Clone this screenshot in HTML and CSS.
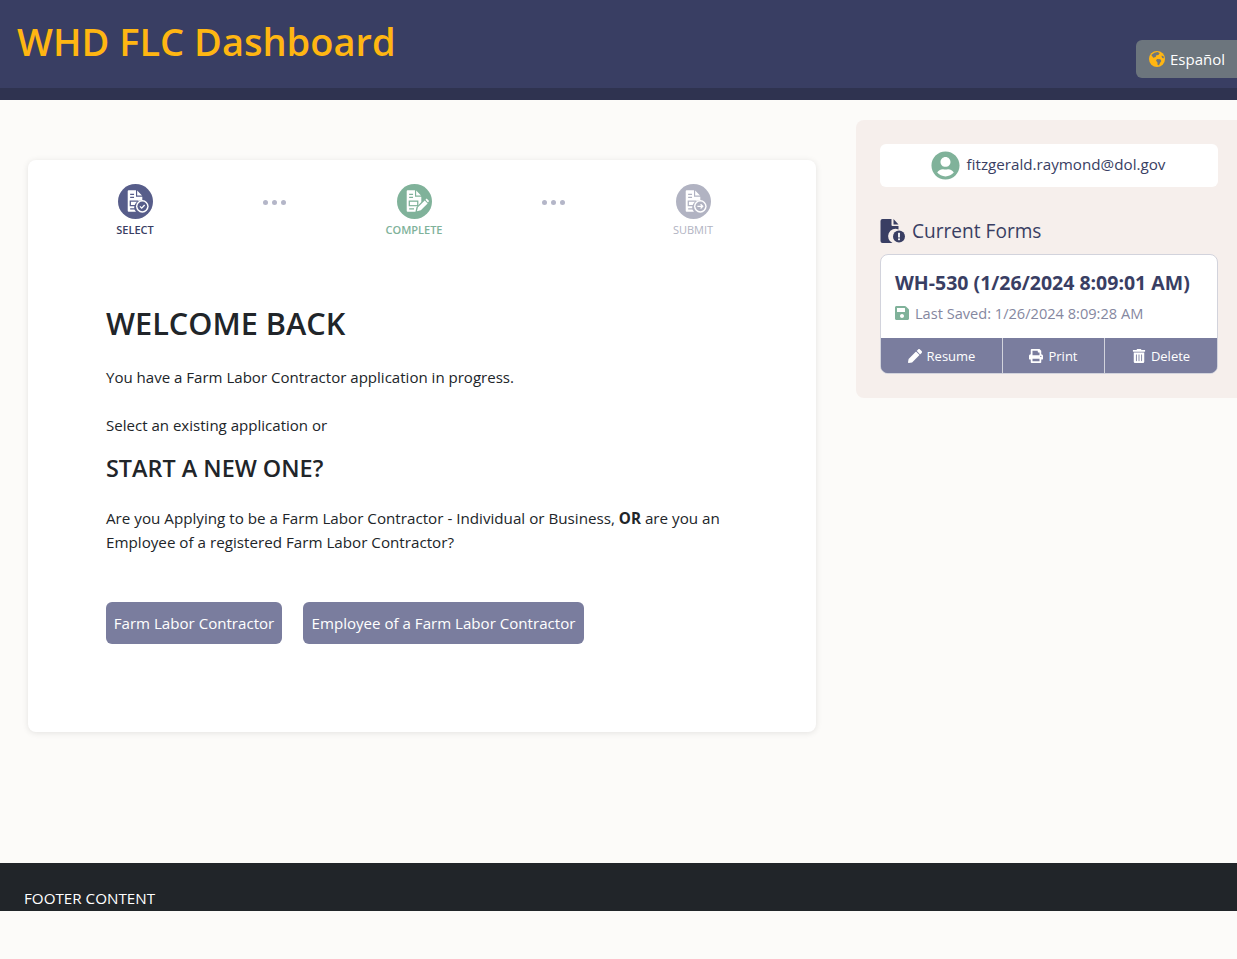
FILE: index.html
```html
<!DOCTYPE html>
<html lang="en">
<head>
<meta charset="utf-8">
<title>WHD FLC Dashboard</title>
<link rel="stylesheet" href="styles.css">
</head>
<body>
<header class="site-header">
  <div class="header-main">
    <h1 class="site-title">WHD FLC Dashboard</h1>
    <button class="lang-btn">
      <svg class="lang-icon" viewBox="0 0 24 24"><circle cx="12" cy="12" r="12" fill="#ffb612"/><path fill="#6c757d" d="M8 2.500l5-1 3 2-2 2.500-3 .5-1 2.500-3.500 1-2-2.500L3.500 6zM12 12l5 .5 1.500 2.500-2 3-1.500 3.500-2-.5-.5-4-2-2.500zM18.500 7l3 .5 1 3.500-2.500-.5z"/></svg>
      <span>Español</span>
    </button>
  </div>
  <div class="header-band"></div>
</header>

<main class="page">
  <section class="card">
    <ol class="steps">
      <li class="step step-select">
        <svg class="step-icon" viewBox="0 0 36 36"><circle cx="18" cy="18" r="18" fill="#575d8a"/><path fill="#fff" d="M11 6.500h7.500v6.500H25v4a7 7 0 0 0-6.500 11.500H11a1 1 0 0 1-1-1v-20a1 1 0 0 1 1-1zM19.700 6.800l5 5h-5z"/><path fill="#575d8a" d="M12.500 10h4v1.300h-4zM12.500 13h4v1.300h-4zM12 17h9v1.300h-7.700v3.400h5v1.300H12zM12.500 25h5v1.300h-5z"/><circle cx="25" cy="23" r="6.500" fill="#fff"/><circle cx="25" cy="23" r="5" fill="#575d8a"/><path fill="none" stroke="#fff" stroke-width="1.400" d="M22.600 23l1.800 1.800 3-3.200"/></svg>
        <span class="step-label">SELECT</span>
      </li>
      <li class="dots"><i></i><i></i><i></i></li>
      <li class="step step-complete">
        <svg class="step-icon" viewBox="0 0 36 36"><circle cx="18" cy="18" r="18" fill="#80b29a"/><path fill="#fff" d="M11 6.500h7.500v6.500H25v5.500l-5 5.500-1 4.500h-8a1 1 0 0 1-1-1v-20a1 1 0 0 1 1-1zM19.700 6.800l5 5h-5z"/><path fill="#80b29a" d="M12.500 10h4v1.300h-4zM12.500 13h4v1.300h-4zM12 17h10v6H12zM12.500 25h5v1.300h-5z"/><path fill="#fff" d="M13.300 18.300h7.400v3.400h-7.400z"/><path fill="#fff" d="M20.500 28l1-4 7-7 3 3-7 7zM29.300 16.200l1.200-1.200 2.500 2.500-1.200 1.500z"/></svg>
        <span class="step-label">COMPLETE</span>
      </li>
      <li class="dots"><i></i><i></i><i></i></li>
      <li class="step step-submit">
        <svg class="step-icon" viewBox="0 0 36 36"><circle cx="18" cy="18" r="18" fill="#b1b3c2"/><path fill="#fff" d="M11 6.500h7.500v6.500H25v4a7 7 0 0 0-6.500 11.500H11a1 1 0 0 1-1-1v-20a1 1 0 0 1 1-1zM19.700 6.800l5 5h-5z"/><path fill="#b1b3c2" d="M12.500 10h4v1.300h-4zM12.500 13h4v1.300h-4zM12 17h9v1.300h-7.700v3.400h5v1.300H12zM12.500 25h5v1.300h-5z"/><circle cx="25" cy="23" r="6.500" fill="#fff"/><circle cx="25" cy="23" r="5" fill="#b1b3c2"/><path fill="none" stroke="#fff" stroke-width="1.300" d="M22 23h5.500M25.300 20.800l2.200 2.200-2.200 2.200"/></svg>
        <span class="step-label">SUBMIT</span>
      </li>
    </ol>
    <div class="card-body">
      <h2 class="welcome">WELCOME BACK</h2>
      <p class="intro">You have a Farm Labor Contractor application in progress.</p>
      <p class="select-line">Select an existing application or</p>
      <h3 class="start">START A NEW ONE?</h3>
      <p class="question">Are you Applying to be a Farm Labor Contractor - Individual or Business, <strong>OR</strong> are you an Employee of a registered Farm Labor Contractor?</p>
      <div class="actions">
        <button class="primary-btn">Farm Labor Contractor</button>
        <button class="primary-btn">Employee of a Farm Labor Contractor</button>
      </div>
    </div>
  </section>

  <aside class="sidebar">
    <div class="user-box">
      <svg class="user-icon" viewBox="0 0 496 512"><path fill="#80b29a" d="M248 8C111 8 0 119 0 256s111 248 248 248 248-111 248-248S385 8 248 8zm0 96c48.600 0 88 39.400 88 88s-39.400 88-88 88-88-39.400-88-88 39.400-88 88-88zm0 344c-58.700 0-111.300-26.600-146.500-68.200 18.800-35.400 55.600-59.800 98.500-59.800 2.400 0 4.800.4 7.100 1.100 13 4.200 26.600 6.900 40.900 6.900 14.300 0 28-2.700 40.900-6.900 2.300-.7 4.700-1.100 7.100-1.100 42.900 0 79.700 24.400 98.500 59.800C359.300 421.400 306.700 448 248 448z"/></svg>
      <span class="user-email">fitzgerald.raymond@dol.gov</span>
    </div>
    <h2 class="forms-title">
      <svg class="forms-icon" viewBox="0 0 25 24"><path fill="#393e63" d="M2 0h9v6a1 1 0 0 0 1 1h6v3.500a7 7 0 0 0-6 13.500H2a2 2 0 0 1-2-2V2a2 2 0 0 1 2-2zM13 0l5 5.500h-5z"/><circle cx="18.500" cy="17.500" r="6" fill="#393e63"/><rect x="17.600" y="13.800" width="1.800" height="4.700" fill="#fff"/><rect x="17.600" y="19.400" width="1.800" height="1.800" fill="#fff"/></svg>
      <span>Current Forms</span>
    </h2>
    <article class="form-card">
      <div class="form-info">
        <h3 class="form-name">WH-530 (1/26/2024 8:09:01 AM)</h3>
        <p class="form-saved">
          <svg class="save-icon" viewBox="0 0 448 512"><path fill="#80b29a" d="M433.941 129.941l-83.882-83.882A48 48 0 0 0 316.118 32H48C21.490 32 0 53.490 0 80v352c0 26.510 21.490 48 48 48h352c26.510 0 48-21.490 48-48V163.882a48 48 0 0 0-14.059-33.941zM224 416c-35.346 0-64-28.654-64-64 0-35.346 28.654-64 64-64s64 28.654 64 64c0 35.346-28.654 64-64 64zm96-304.520V212c0 6.627-5.373 12-12 12H76c-6.627 0-12-5.373-12-12V108c0-6.627 5.373-12 12-12h228.520c3.183 0 6.235 1.264 8.485 3.515l3.480 3.480A11.996 11.996 0 0 1 320 111.480z"/></svg>
          <span>Last Saved: 1/26/2024 8:09:28 AM</span>
        </p>
      </div>
      <div class="form-actions">
        <button class="form-btn btn-resume"><svg class="btn-icon" viewBox="0 0 512 512"><path fill="#fff" d="M497.900 142.100l-46.100 46.100c-4.700 4.700-12.300 4.700-17 0l-111-111c-4.700-4.700-4.700-12.300 0-17l46.100-46.100c18.700-18.700 49.100-18.700 67.900 0l60.100 60.100c18.800 18.700 18.800 49.100 0 67.900zM284.200 99.800L21.600 362.400.4 483.900c-2.900 16.400 11.400 30.600 27.800 27.800l121.500-21.300 262.600-262.600c4.700-4.700 4.700-12.300 0-17l-111-111c-4.800-4.700-12.400-4.700-17.100 0z"/></svg>Resume</button>
        <button class="form-btn btn-print"><svg class="btn-icon" viewBox="0 0 512 512"><path fill="#fff" d="M448 192V77.250c0-8.490-3.370-16.620-9.370-22.630L393.370 9.370c-6-6-14.140-9.370-22.630-9.370H96C78.330 0 64 14.330 64 32v160c-35.350 0-64 28.650-64 64v112c0 8.840 7.160 16 16 16h48v96c0 17.670 14.330 32 32 32h320c17.670 0 32-14.330 32-32v-96h48c8.840 0 16-7.160 16-16V256c0-35.350-28.650-64-64-64zm-64 256H128v-96h256v96zm0-224H128V64h192v48c0 8.840 7.160 16 16 16h48v96zm48 72c-13.250 0-24-10.750-24-24 0-13.260 10.750-24 24-24s24 10.740 24 24c0 13.250-10.750 24-24 24z"/></svg>Print</button>
        <button class="form-btn btn-delete"><svg class="btn-icon" viewBox="0 0 448 512"><path fill="#fff" d="M32 464a48 48 0 0 0 48 48h288a48 48 0 0 0 48-48V128H32zm272-256a16 16 0 0 1 32 0v224a16 16 0 0 1-32 0zm-96 0a16 16 0 0 1 32 0v224a16 16 0 0 1-32 0zm-96 0a16 16 0 0 1 32 0v224a16 16 0 0 1-32 0zM432 32H312l-9.400-18.700A24 24 0 0 0 281.100 0H166.800a23.720 23.720 0 0 0-21.400 13.300L136 32H16A16 16 0 0 0 0 48v32a16 16 0 0 0 16 16h416a16 16 0 0 0 16-16V48a16 16 0 0 0-16-16z"/></svg>Delete</button>
      </div>
    </article>
  </aside>
</main>

<footer class="site-footer"><span>FOOTER CONTENT</span></footer>
</body>
</html>
```

FILE: styles.css
```css
* { box-sizing: border-box; }
html, body { margin: 0; padding: 0; }
body {
  background: #fcfbf9;
  color: #212529;
  font-family: "Open Sans", "Noto Sans", sans-serif;
  font-size: 15.05px;
  line-height: 24px;
  min-height: 959px;
}
h1, h2, h3, p, ol { margin: 0; padding: 0; }
button { font-family: inherit; border: 0; cursor: pointer; }

.site-header { background: #393e63; }
.header-main {
  height: 88px;
  display: flex;
  justify-content: space-between;
  padding: 0 0 0 17px;
}
.site-title {
  color: #ffb612;
  font-size: 38px;
  font-weight: 600;
  line-height: 50px;
  padding-top: 16px;
}
.lang-btn {
  align-self: flex-start;
  margin-top: 40px;
  height: 38px;
  width: 101px;
  background: #6c757d;
  color: #fff;
  font-size: 15px;
  border-radius: 6px 0 0 6px;
  display: flex;
  align-items: center;
  gap: 5px;
  padding: 0 0 0 13px;
}
.lang-icon { width: 16px; height: 16px; }
.header-band { height: 12px; background: #2f3350; }

.page {
  height: 763px;
  display: flex;
  align-items: flex-start;
  padding-left: 28px;
}
.card {
  width: 788px;
  height: 572px;
  margin-top: 60px;
  background: #fff;
  border-radius: 8px;
  box-shadow: 0 1px 6px rgba(0, 0, 0, .1);
  padding-top: 24px;
}
.steps {
  list-style: none;
  display: flex;
  align-items: flex-start;
  justify-content: space-between;
  padding: 0 88px 0 72px;
}
.step {
  width: 70px;
  display: flex;
  flex-direction: column;
  align-items: center;
  gap: 3px;
  font-size: 11px;
  line-height: 16px;
}
.step-icon { width: 35px; height: 35px; display: block; }
.step-select .step-label { color: #393e63; font-weight: 600; }
.step-complete .step-label { color: #80b29a; font-weight: 600; }
.step-submit .step-label { color: #b1b3c2; }
.dots { display: flex; gap: 4px; margin-top: 16px; }
.dots i { width: 5px; height: 5px; border-radius: 50%; background: #b4b6c8; display: block; }

.card-body { padding: 64px 78px 0; }
.welcome { font-size: 30.7px; font-weight: 600; line-height: 42px; margin-bottom: 21px; }
.intro { margin-bottom: 24px; }
.select-line { margin-bottom: 15px; }
.start { font-size: 23.4px; font-weight: 600; line-height: 32px; margin-bottom: 22px; }
.question { margin-bottom: 48px; font-size: 15.2px; }
.actions { display: grid; grid-template-columns: 176px 281px; gap: 21px; }
.primary-btn {
  height: 42px;
  padding: 0;
  border-radius: 6px;
  background: #7a7d9e;
  color: #fff;
  font-size: 15.1px;
}

.sidebar {
  margin: 20px 0 0 40px;
  flex: 1;
  height: 278px;
  background: #f6efec;
  border-radius: 8px 0 0 8px;
  padding: 24px 19px 0 24px;
}
.user-box {
  height: 43px;
  background: #fff;
  border-radius: 6px;
  display: flex;
  align-items: center;
  justify-content: center;
  gap: 7px;
  padding-right: 2px;
  color: #393e63;
  font-size: 15.2px;
}
.user-email { padding-bottom: 3px; }
.user-icon { width: 29px; height: 29px; }
.forms-title {
  display: flex;
  align-items: center;
  gap: 6px;
  margin-top: 29px;
  font-size: 19.1px;
  font-weight: 400;
  line-height: 30px;
  color: #393e63;
}
.forms-icon { width: 26px; height: 24px; }
.form-card {
  margin-top: 8px;
  background: #fff;
  border: 1px solid #d2d3dc;
  border-radius: 8px;
  overflow: hidden;
}
.form-info { height: 83px; padding: 14px 14px 0; }
.form-name { font-size: 19.5px; font-weight: 700; line-height: 28px; color: #393e63; white-space: nowrap; }
.form-saved {
  display: flex;
  align-items: center;
  gap: 6px;
  margin-top: 4px;
  font-size: 14.6px;
  color: #85879f;
}
.save-icon { width: 14px; height: 16px; }
.form-actions { display: flex; height: 35px; background: #7a7d9e; }
.form-btn {
  background: #7a7d9e;
  color: #fff;
  font-size: 13px;
  display: flex;
  align-items: center;
  justify-content: center;
  gap: 5px;
  padding: 0;
  border-left: 1px solid #d2d3dc;
}
.btn-resume { width: 121px; border-left: 0; }
.btn-print { width: 102px; }
.btn-delete { flex: 1; }
.btn-icon { width: 14px; height: 14px; }

.site-footer {
  height: 48px;
  background: #212529;
  color: #fff;
  padding: 23px 24px 0;
  font-size: 15.2px;
  line-height: 24px;
  overflow: hidden;
}
```
